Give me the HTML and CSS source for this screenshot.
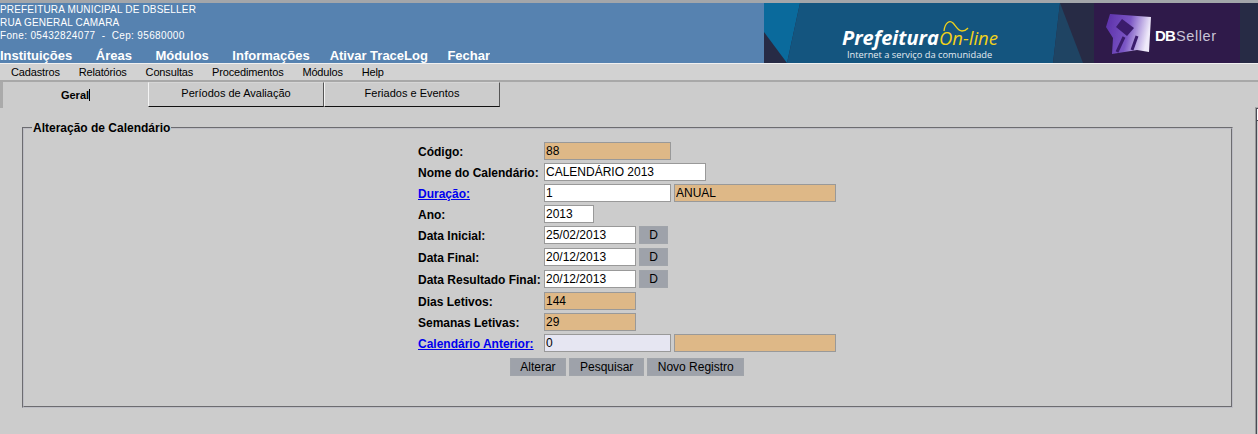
FILE: index.html
```html
<!DOCTYPE html>
<html lang="pt">
<head>
<meta charset="utf-8">
<title>Alteração de Calendário</title>
<link rel="stylesheet" href="styles.css">
</head>
<body>
<header class="top">
  <div class="top-left">
    <div class="org caps">PREFEITURA MUNICIPAL DE DBSELLER</div>
    <div class="org caps">RUA GENERAL CAMARA</div>
    <div class="org">Fone: 05432824077 &nbsp;-&nbsp; Cep: 95680000</div>
    <nav class="nav">
      <a>Instituições</a><a>Áreas</a><a>Módulos</a><a>Informações</a><a class="near">Ativar TraceLog</a><a class="nearer">Fechar</a>
    </nav>
  </div>
  <svg class="banner" width="494" height="60" viewBox="764 3 494 60" aria-hidden="true">
    <defs>
      <linearGradient id="cube" x1="0" y1="0" x2="1" y2="0.2">
        <stop offset="0" stop-color="#5a2ea8"/>
        <stop offset="0.55" stop-color="#7a55c4"/>
        <stop offset="1" stop-color="#efeafa"/>
      </linearGradient>
      <filter id="soft"><feGaussianBlur stdDeviation="0.6"/></filter>
    </defs>
    <rect x="764" y="3" width="494" height="60" fill="#272b45"/>
    <polygon points="764,3 800,3 787,63 764,32" fill="#0a6a9c"/>
    <polygon points="800,3 1060,3 1053,63 787,63" fill="#14557f"/>
    <polygon points="1060,3 1083,63 1053,63" fill="#1f4463"/>
    <rect x="1094" y="3" width="146" height="60" fill="#2f1a4a"/>
    <text x="842" y="45" class="b-pref">Prefeitura</text>
    <text x="939" y="45" class="b-online">On-line</text>
    <path d="M944 31c1-9 6-11 9-8s5 8 9 8 5-2 6-3" fill="none" stroke="#f2d21a" stroke-width="1.3"/>
    <text x="847" y="58" class="b-sub">Internet a serviço da comunidade</text>
    <g filter="url(#soft)">
      <polygon points="1110,14 1151,17 1149,52 1137,50 1112,54 1113,38 1106,27" fill="url(#cube)"/>
      <polygon points="1122,19 1134,28 1127,36 1116,27" fill="#3a1d6c"/>
      <path d="M1117 52l7-15M1132 50l5-14" stroke="#3a1d6c" stroke-width="3" fill="none"/>
    </g>
    <text x="1155" y="41" class="b-db">DB</text>
    <text x="1176" y="41" class="b-seller">Seller</text>
  </svg>
</header>
<nav class="menu">
  <a>Cadastros</a><a>Relatórios</a><a>Consultas</a><a>Procedimentos</a><a>Módulos</a><a>Help</a>
</nav>
<div class="tabs">
  <div class="tab tab-active"><span class="caret">Geral</span></div>
  <div class="tab tab-b">Períodos de Avaliação</div>
  <div class="tab tab-c">Feriados e Eventos</div>
</div>
<main class="content">
  <fieldset class="box">
    <legend>Alteração de Calendário</legend>
    <table class="form">
      <tr><td class="lbl">Código:</td><td><input class="in w127 ro" value="88" readonly></td></tr>
      <tr><td class="lbl">Nome do Calendário:</td><td><input class="in w162" value="CALENDÁRIO 2013"></td></tr>
      <tr><td class="lbl"><a class="lnk">Duração:</a></td><td><div class="pair"><input class="in w127" value="1"><input class="in w162 ro" value="ANUAL" readonly></div></td></tr>
      <tr><td class="lbl">Ano:</td><td><input class="in w50" value="2013"></td></tr>
      <tr class="tall"><td class="lbl">Data Inicial:</td><td><div class="pair"><input class="in w92" value="25/02/2013"><button class="btn d">D</button></div></td></tr>
      <tr class="tall"><td class="lbl">Data Final:</td><td><div class="pair"><input class="in w92" value="20/12/2013"><button class="btn d">D</button></div></td></tr>
      <tr class="tall"><td class="lbl">Data Resultado Final:</td><td><div class="pair"><input class="in w92" value="20/12/2013"><button class="btn d">D</button></div></td></tr>
      <tr><td class="lbl">Dias Letivos:</td><td><input class="in w92 ro" value="144" readonly></td></tr>
      <tr><td class="lbl">Semanas Letivas:</td><td><input class="in w92 ro" value="29" readonly></td></tr>
      <tr><td class="lbl"><a class="lnk">Calendário Anterior:</a></td><td><div class="pair"><input class="in w127 lilac" value="0"><input class="in w162 ro" value="" readonly></div></td></tr>
    </table>
    <div class="actions">
      <button class="btn">Alterar</button><button class="btn">Pesquisar</button><button class="btn">Novo Registro</button>
    </div>
  </fieldset>
</main>
<div class="edge"><div class="edge-head"></div></div>
</body>
</html>
```
FILE: styles.css
```css
* { box-sizing: border-box; }
html, body { margin: 0; height: 434px; overflow: hidden; }
body { background: #cccccc; font-family: "Liberation Sans", Arial, sans-serif; color: #000; position: relative; }

.top { display: flex; justify-content: space-between; height: 64px; background: #5682b0; border-top: 3px solid #a3a6aa; border-bottom: 1px solid #f0f0f0; }
.top-left { color: #fff; overflow: hidden; }
.org { font-size: 10px; line-height: 13px; letter-spacing: 0.35px; height: 13px; }
.caps { letter-spacing: 0.17px; }
.nav { display: flex; gap: 23.5px; margin-top: 6px; font-size: 13px; font-weight: bold; line-height: 15px; }
.near { margin-left: -3.5px; }
.nearer { margin-left: -4px; }
.banner { display: block; flex: none; }
.b-pref { font: italic bold 20px "Open Sans", sans-serif; fill: #fff; }
.b-online { font: italic 18.5px "Open Sans", sans-serif; fill: #f2d21a; }
.b-sub { font: 9.3px "Open Sans", sans-serif; fill: #e4ecf2; }
.b-db { font: bold 15px "Liberation Sans", sans-serif; letter-spacing: -0.8px; fill: #fff; }
.b-seller { font: 14.5px "Liberation Sans", sans-serif; letter-spacing: 0.6px; fill: #c9c4d6; }

.menu { display: flex; gap: 18.9px; height: 18px; padding-left: 11px; background: #d2d2d2; border-bottom: 2px solid #a8a8a8; font-size: 11px; line-height: 16px; letter-spacing: -0.15px; }

.tabs { display: flex; height: 26px; }
.tab { text-align: center; font-size: 11px; line-height: 21px; border-top: 1px solid #d6d6d6; border-left: 1px solid #f4f4f4; border-right: 1px solid #555; border-bottom: 1px solid #111; margin-bottom: 1px; }
.tab-active { width: 148px; font-weight: bold; border: 0; border-left: 3px solid #aaaaaa; background: #cccccc; line-height: 26px; margin-bottom: 0; }
.caret { border-right: 1px solid #000; }
.tab-b { width: 176px; }
.tab-c { width: 176px; }

.content { padding: 12px 25px 0 22px; }
.box { height: 288px; margin: 0; padding: 0; border: 2px groove #bdbdc4; min-width: 0; }
.box legend { margin-left: 8px; padding: 2px 1px 0; font-size: 12px; font-weight: bold; line-height: 13px; }
.form { border-collapse: collapse; margin: 5px auto 0; width: 419px; }
.form tr { height: 21px; }
.form tr.tall { height: 22px; }
.form td { padding: 0; }
.form .lbl { width: 126px; padding-top: 2px; font-size: 12px; font-weight: bold; white-space: nowrap; }
.lnk { color: #0000ee; text-decoration: underline; }
.pair { display: flex; gap: 3px; align-items: center; }
.in { display: block; height: 18px; padding: 0 1px; border: 1px solid #999999; background: #fff; font: 12px "Liberation Sans", Arial, sans-serif; color: #000; outline: 0; }
.ro { background: #deb887; }
.lilac { background: #e6e6f2; }
.w50 { width: 50px; } .w92 { width: 92px; } .w127 { width: 127px; } .w162 { width: 162px; }
.btn { height: 18px; padding: 0 9.7px; border: 1px solid #a0a4aa; background: #9ea2aa; font: 12px "Liberation Sans", Arial, sans-serif; color: #000; }
.d { width: 29px; padding: 0; }
.actions { display: flex; justify-content: center; gap: 3px; margin-top: 5px; padding-right: 1px; }

.edge { position: absolute; left: 1255px; top: 107px; width: 3px; height: 327px; border-left: 1px solid #9a9a9a; border-top: 1px solid #aaaaaa; background: linear-gradient(90deg, #4a4a55 1px, #cccccc 1px); }
.edge-head { height: 13px; margin-left: 1px; background: #fff; border-top: 1px solid #4a4a55; border-bottom: 1px solid #4a4a55; }
```
